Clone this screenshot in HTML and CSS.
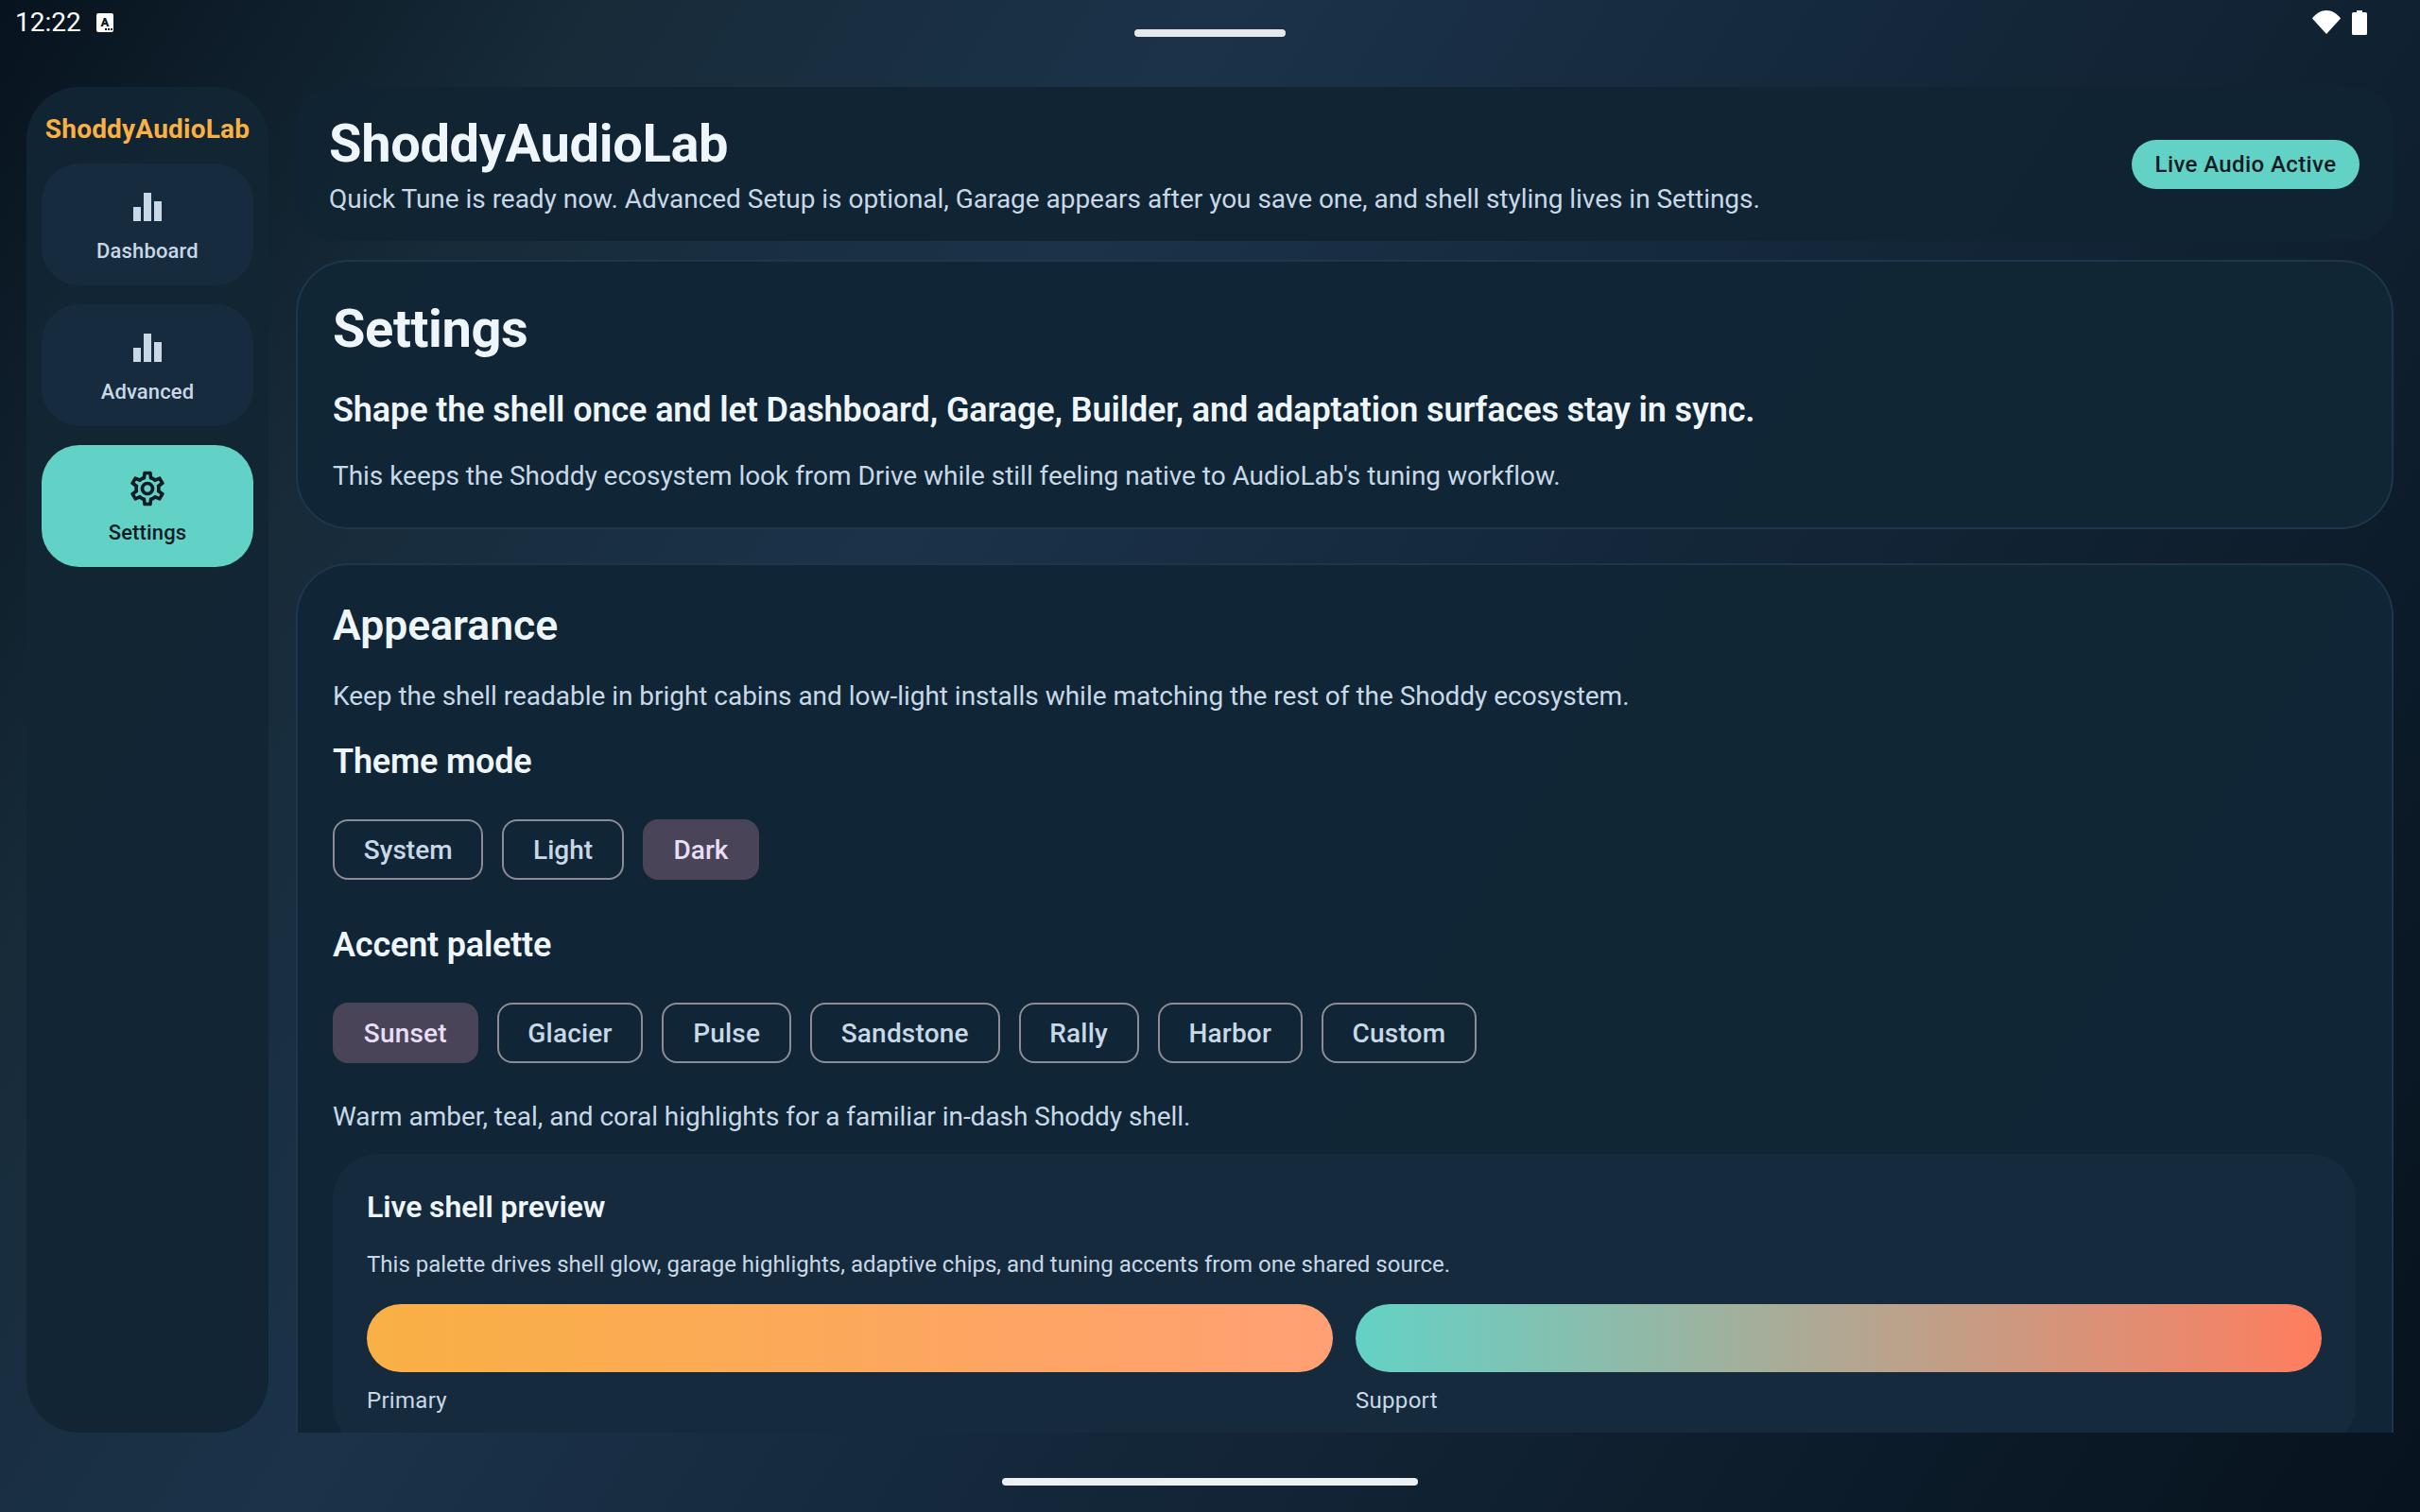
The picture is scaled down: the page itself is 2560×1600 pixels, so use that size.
FILE: index.html
```html
<!DOCTYPE html>
<html>
<head>
	<title>ShoddyAudioLab</title>
	<meta content="width=device-width, initial-scale=1" name="viewport">
	<link rel="stylesheet" href="styles.css">
</head>
<body>
<div class="status-bar">
	<div class="status-left">
		<span class="clock">12:22</span>
		<svg class="a-icon" aria-hidden="true" width="18" height="20" viewBox="0 0 18 20">
			<rect width="18" height="20" rx="2" fill="#fff"></rect>
			<text x="9" y="13.5" class="a-icon-letter">A</text>
			<rect x="9" y="16" width="2" height="2" fill="#0b1824"></rect>
			<rect x="12" y="16" width="2" height="2" fill="#0b1824"></rect>
			<rect x="15" y="16" width="2" height="2" fill="#0b1824"></rect>
		</svg>
	</div>
	<div class="top-handle"></div>
	<div class="status-right">
		<svg aria-hidden="true" width="30" height="25" viewBox="0 0 30 25">
			<path d="M0 8.5C4 3.2 9.2 0 15 0s11 3.2 15 8.5L15 25z" fill="#fff"></path>
		</svg>
		<svg aria-hidden="true" width="16" height="26" viewBox="0 0 16 26">
			<path d="M5 0h6v2h3.500q1.500 0 1.500 1.500v21q0 1.500-1.500 1.500h-13q-1.500 0-1.500-1.500v-21q0-1.500 1.500-1.500h3.500z" fill="#fff"></path>
		</svg>
	</div>
</div>

<div class="app">
	<nav class="sidebar">
		<div class="brand">ShoddyAudioLab</div>
		<a class="nav-item" href="#">
			<svg class="nav-icon" aria-hidden="true" width="44" height="44" viewBox="0 0 44 44">
				<rect x="7" y="22" width="8" height="15"></rect>
				<rect x="18" y="7" width="8" height="30"></rect>
				<rect x="29" y="16" width="8" height="21"></rect>
			</svg>
			<span>Dashboard</span>
		</a>
		<a class="nav-item" href="#">
			<svg class="nav-icon" aria-hidden="true" width="44" height="44" viewBox="0 0 44 44">
				<rect x="7" y="22" width="8" height="15"></rect>
				<rect x="18" y="7" width="8" height="30"></rect>
				<rect x="29" y="16" width="8" height="21"></rect>
			</svg>
			<span>Advanced</span>
		</a>
		<a class="nav-item active" href="#">
			<svg class="nav-icon" aria-hidden="true" width="44" height="44" viewBox="0 0 24 24">
				<path d="M19.43 12.98c.04-.32.07-.64.07-.98 0-.34-.03-.66-.07-.98l2.110-1.650c.19-.15.24-.42.12-.64l-2-3.460c-.09-.16-.26-.25-.44-.25-.06 0-.12.01-.17.03l-2.490 1c-.52-.4-1.080-.73-1.690-.98l-.38-2.650C14.460 2.180 14.250 2 14 2h-4c-.25 0-.46.18-.49.42l-.38 2.650c-.61.25-1.170.59-1.690.98l-2.490-1c-.06-.02-.12-.03-.18-.03-.17 0-.34.09-.43.25l-2 3.460c-.13.22-.07.49.12.64l2.110 1.650c-.04.32-.07.65-.07.98 0 .33.03.66.07.98l-2.110 1.650c-.19.15-.24.42-.12.64l2 3.460c.09.16.26.25.44.25.06 0 .12-.01.17-.03l2.490-1c.52.4 1.080.73 1.690.98l.38 2.650c.03.24.24.42.49.42h4c.25 0 .46-.18.49-.42l.38-2.650c.61-.25 1.170-.59 1.690-.98l2.490 1c.06.02.12.03.18.03.17 0 .34-.09.43-.25l2-3.460c.12-.22.07-.49-.12-.64l-2.110-1.650zm-1.980-1.710c.04.31.05.52.05.73 0 .21-.02.43-.05.73l-.14 1.130.89.7 1.080.84-.7 1.210-1.270-.51-1.040-.42-.9.68c-.43.32-.84.56-1.250.73l-1.060.43-.16 1.130-.2 1.350h-1.400l-.19-1.350-.16-1.130-1.060-.43c-.43-.18-.83-.41-1.230-.71l-.91-.7-1.060.43-1.270.51-.7-1.210 1.080-.84.89-.7-.14-1.130c-.03-.31-.05-.54-.05-.74s.02-.43.05-.73l.14-1.130-.89-.7-1.080-.84.7-1.210 1.270.51 1.040.42.9-.68c.43-.32.84-.56 1.250-.73l1.060-.43.16-1.130.2-1.350h1.390l.19 1.350.16 1.130 1.060.43c.43.18.83.41 1.230.71l.91.7 1.060-.43 1.270-.51.7 1.210-1.070.85-.89.7.14 1.130zM12 8c-2.210 0-4 1.790-4 4s1.790 4 4 4 4-1.790 4-4-1.790-4-4-4zm0 6c-1.100 0-2-.9-2-2s.9-2 2-2 2 .9 2 2-.9 2-2 2z"></path>
			</svg>
			<span>Settings</span>
		</a>
	</nav>

	<main class="content">
		<header class="top-card">
			<div>
				<h1 class="app-title">ShoddyAudioLab</h1>
				<p class="app-sub">Quick Tune is ready now. Advanced Setup is optional, Garage appears after you save one, and shell styling lives in Settings.</p>
			</div>
			<span class="live-pill">Live Audio Active</span>
		</header>

		<section class="card intro-card">
			<h2 class="page-title">Settings</h2>
			<p class="lead">Shape the shell once and let Dashboard, Garage, Builder, and adaptation surfaces stay in sync.</p>
			<p class="body-text">This keeps the Shoddy ecosystem look from Drive while still feeling native to AudioLab's tuning workflow.</p>
		</section>

		<section class="card appearance-card">
			<h2 class="section-title">Appearance</h2>
			<p class="body-text keep-text">Keep the shell readable in bright cabins and low-light installs while matching the rest of the Shoddy ecosystem.</p>
			<h3 class="group-title theme-title">Theme mode</h3>
			<div class="chips theme-chips">
				<span class="chip">System</span>
				<span class="chip">Light</span>
				<span class="chip selected">Dark</span>
			</div>
			<h3 class="group-title accent-title">Accent palette</h3>
			<div class="chips accent-chips">
				<span class="chip selected">Sunset</span>
				<span class="chip">Glacier</span>
				<span class="chip">Pulse</span>
				<span class="chip">Sandstone</span>
				<span class="chip">Rally</span>
				<span class="chip">Harbor</span>
				<span class="chip">Custom</span>
			</div>
			<p class="body-text warm-text">Warm amber, teal, and coral highlights for a familiar in-dash Shoddy shell.</p>

			<div class="preview">
				<h4 class="preview-title">Live shell preview</h4>
				<p class="preview-text">This palette drives shell glow, garage highlights, adaptive chips, and tuning accents from one shared source.</p>
				<div class="swatches">
					<div>
						<div class="swatch primary"></div>
						<div class="swatch-label">Primary</div>
					</div>
					<div>
						<div class="swatch support"></div>
						<div class="swatch-label">Support</div>
					</div>
				</div>
			</div>
		</section>
	</main>
</div>

<div class="gesture-bar">
	<div class="bottom-handle"></div>
</div>
</body>
</html>
```

FILE: styles.css
```css
* {
	box-sizing: border-box;
}

html,
body {
	margin: 0;
	padding: 0;
	height: 100%;
}

body {
	width: 2560px;
	height: 1600px;
	overflow: hidden;
	display: flex;
	flex-direction: column;
	font-family: Roboto, "Liberation Sans", sans-serif;
	color: #c8d8e6;
	background: linear-gradient(122deg, #07131e 0%, #172b39 18%, #1b3249 36.5%, #07131e 100%);
}

h1,
h2,
h3,
h4,
p {
	margin: 0;
}

/* status bar */
.status-bar {
	height: 92px;
	flex: none;
	display: grid;
	grid-template-columns: 1fr 160px 1fr;
	align-items: start;
}

.status-left {
	display: flex;
	align-items: center;
	gap: 16px;
	height: 48px;
	padding-left: 16px;
}

.clock {
	font-size: 28px;
	line-height: 48px;
	color: #fff;
}

.a-icon-letter {
	font-family: Roboto, sans-serif;
	font-size: 13px;
	font-weight: 900;
	text-anchor: middle;
	fill: #0b1824;
}

.top-handle {
	width: 160px;
	height: 8px;
	margin-top: 31px;
	border-radius: 4px;
	background: #e6e9ec;
}

.status-right {
	display: flex;
	justify-content: flex-end;
	gap: 12px;
	padding-top: 11px;
	padding-right: 56px;
}

/* app shell */
.app {
	flex: 1;
	min-height: 0;
	display: flex;
	gap: 29px;
	padding: 0 28px;
}

.sidebar {
	width: 256px;
	flex: none;
	padding: 25px 16px;
	border-radius: 56px;
	background: rgba(18, 37, 52, 0.97);
}

.brand {
	font-size: 28px;
	line-height: 40px;
	font-weight: 700;
	letter-spacing: 0.2px;
	color: #f9b044;
	text-align: center;
	white-space: nowrap;
	margin-bottom: 16px;
}

.nav-item {
	height: 129px;
	margin-bottom: 20px;
	padding-top: 24px;
	display: flex;
	flex-direction: column;
	align-items: center;
	border-radius: 40px;
	background: #172b3e;
	color: #c8d8e6;
	text-decoration: none;
	font-size: 22px;
	line-height: 32px;
	font-weight: 500;
	letter-spacing: 0.15px;
}

.nav-item span {
	margin-top: 9px;
}

.nav-icon {
	fill: #c8d8e6;
}

.nav-item.active {
	background: #63d2c6;
	color: #0f1c26;
}

.nav-item.active .nav-icon {
	fill: #0f1c26;
}

.content {
	flex: 1;
	min-width: 0;
	overflow: hidden;
}

/* header card */
.top-card {
	height: 163px;
	display: flex;
	justify-content: space-between;
	align-items: center;
	padding: 0 36px 0 35px;
	border-radius: 40px;
	background: rgba(16, 36, 51, 0.95);
}

.app-title {
	font-size: 56px;
	line-height: 70px;
	font-weight: 700;
	letter-spacing: -0.35px;
	color: #eef5fb;
}

.app-sub {
	margin-top: 4px;
	font-size: 28px;
	line-height: 40px;
	letter-spacing: -0.03px;
}

.live-pill {
	width: 241px;
	height: 52px;
	border-radius: 26px;
	background: #63d2c6;
	color: #0f1c26;
	font-size: 24px;
	line-height: 52px;
	font-weight: 500;
	letter-spacing: 0.4px;
	text-align: center;
}

/* cards */
.card {
	border: 2px solid rgba(38, 66, 92, 0.6);
	border-radius: 56px;
	background: rgba(17, 38, 54, 0.97);
	padding: 34px 38px 34px 37px;
}

.intro-card {
	margin-top: 20px;
	height: 285px;
}

.appearance-card {
	margin-top: 36px;
	padding-bottom: 60px;
}

.page-title {
	font-size: 56px;
	line-height: 74px;
	font-weight: 700;
	letter-spacing: -0.4px;
	color: #eef5fb;
}

.lead {
	margin-top: 24px;
	font-size: 36px;
	line-height: 50px;
	font-weight: 600;
	letter-spacing: -0.12px;
	color: #eef5fb;
}

.body-text {
	font-size: 28px;
	line-height: 40px;
	letter-spacing: -0.03px;
}

.intro-card .body-text {
	margin-top: 25px;
}

.section-title {
	font-size: 44.500px;
	line-height: 60px;
	font-weight: 600;
	color: #eef5fb;
}

.keep-text {
	margin-top: 25px;
}

.group-title {
	font-size: 36px;
	line-height: 44px;
	font-weight: 600;
	letter-spacing: -0.2px;
	color: #eef5fb;
}

.theme-title {
	margin-top: 27px;
}

.accent-title {
	margin-top: 47px;
}

.chips {
	display: flex;
	gap: 20px;
	margin-top: 39px;
}

.chip {
	height: 64px;
	padding: 0 30.750px;
	border: 2px solid #8d8c93;
	border-radius: 16px;
	font-size: 28px;
	line-height: 61px;
	font-weight: 500;
	letter-spacing: 0.2px;
	color: #c8d8e6;
}

.theme-chips .chip {
	letter-spacing: 0;
}

.chip.selected {
	border-color: #4a4458;
	background: #4a4458;
	color: #e8def8;
}

.warm-text {
	margin-top: 37px;
}

/* preview */
.preview {
	margin-top: 19px;
	padding: 34px 36px 36px 36px;
	border-radius: 48px;
	background: #162a3d;
}

.preview-title {
	font-size: 32px;
	line-height: 44px;
	font-weight: 600;
	letter-spacing: -0.1px;
	color: #eef5fb;
}

.preview-text {
	margin-top: 21px;
	font-size: 24px;
	line-height: 36px;
}

.swatches {
	display: grid;
	grid-template-columns: 1fr 1fr;
	gap: 24px;
	margin-top: 24px;
}

.swatch {
	height: 72px;
	border-radius: 36px;
}

.swatch.primary {
	background: linear-gradient(90deg, #f9b044, #ffa074);
}

.swatch.support {
	background: linear-gradient(90deg, #63d2c6, #ff7d5e);
}

.swatch-label {
	margin-top: 14px;
	font-size: 24px;
	line-height: 32px;
	letter-spacing: 0.3px;
}

/* gesture bar */
.gesture-bar {
	height: 84px;
	flex: none;
	display: flex;
	justify-content: center;
	padding-top: 48px;
}

.bottom-handle {
	width: 440px;
	height: 8px;
	border-radius: 4px;
	background: #eef1f3;
}
```
